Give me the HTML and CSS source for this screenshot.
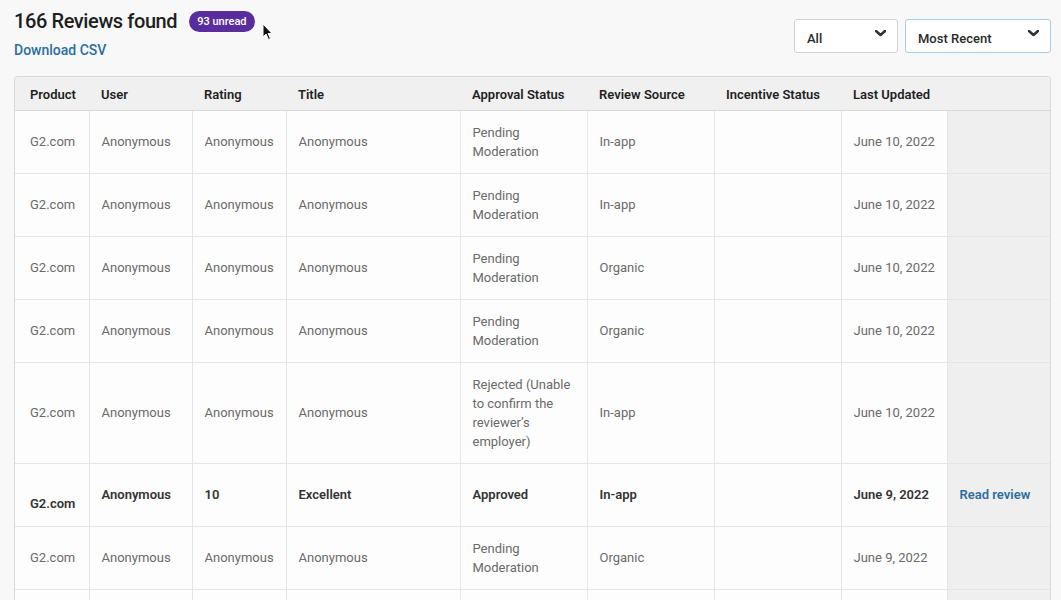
FILE: index.html
```html
<!DOCTYPE html>
<html>
<head>
<meta charset="utf-8">
<link rel="stylesheet" href="styles.css">
</head>
<body>
<div class="page">
  <div class="top">
    <div class="summary">
      <div class="title-line">
        <h1 class="title">166 Reviews found</h1>
        <span class="badge">93 unread</span>
        <svg class="cursor" width="12" height="18" viewBox="0 0 12 18"><path d="M1 1 L1 14 L4 11 L6.5 16.5 L8.5 15.5 L6 10.5 L10 10.5 Z" fill="#111" stroke="#fff" stroke-width="1"/></svg>
      </div>
      <a class="csv" href="#">Download CSV</a>
    </div>
    <div class="filters">
      <div class="select select-all"><span>All</span><svg class="chev" width="11" height="7" viewBox="0 0 11 7"><path d="M1 1 L5.5 5 L10 1" fill="none" stroke="#333" stroke-width="2.6" stroke-linecap="round" stroke-linejoin="round"/></svg></div>
      <div class="select select-sort"><span>Most Recent</span><svg class="chev" width="11" height="7" viewBox="0 0 11 7"><path d="M1 1 L5.5 5 L10 1" fill="none" stroke="#333" stroke-width="2.6" stroke-linecap="round" stroke-linejoin="round"/></svg></div>
    </div>
  </div>
  <div class="table-wrap">
    <table class="reviews">
      <colgroup>
        <col class="c-product"><col class="c-user"><col class="c-rating"><col class="c-title"><col class="c-status"><col class="c-source"><col class="c-incentive"><col class="c-date"><col class="c-action">
      </colgroup>
      <thead>
        <tr><th>Product</th><th>User</th><th>Rating</th><th>Title</th><th>Approval Status</th><th>Review Source</th><th>Incentive Status</th><th>Last Updated</th><th class="action"></th></tr>
      </thead>
      <tbody>
        <tr><td>G2.com</td><td>Anonymous</td><td>Anonymous</td><td>Anonymous</td><td>Pending<br>Moderation</td><td>In-app</td><td></td><td>June 10, 2022</td><td class="action"></td></tr>
        <tr><td>G2.com</td><td>Anonymous</td><td>Anonymous</td><td>Anonymous</td><td>Pending<br>Moderation</td><td>In-app</td><td></td><td>June 10, 2022</td><td class="action"></td></tr>
        <tr><td>G2.com</td><td>Anonymous</td><td>Anonymous</td><td>Anonymous</td><td>Pending<br>Moderation</td><td>Organic</td><td></td><td>June 10, 2022</td><td class="action"></td></tr>
        <tr><td>G2.com</td><td>Anonymous</td><td>Anonymous</td><td>Anonymous</td><td>Pending<br>Moderation</td><td>Organic</td><td></td><td>June 10, 2022</td><td class="action"></td></tr>
        <tr><td>G2.com</td><td>Anonymous</td><td>Anonymous</td><td>Anonymous</td><td>Rejected (Unable<br>to confirm the<br>reviewer’s<br>employer)</td><td>In-app</td><td></td><td>June 10, 2022</td><td class="action"></td></tr>
        <tr class="unread"><td class="product-low">G2.com</td><td>Anonymous</td><td>10</td><td>Excellent</td><td>Approved</td><td>In-app</td><td></td><td>June 9, 2022</td><td class="action"><a class="read" href="#">Read review</a></td></tr>
        <tr><td>G2.com</td><td>Anonymous</td><td>Anonymous</td><td>Anonymous</td><td>Pending<br>Moderation</td><td>Organic</td><td></td><td>June 9, 2022</td><td class="action"></td></tr>
        <tr class="partial"><td></td><td></td><td></td><td></td><td></td><td></td><td></td><td></td><td class="action"></td></tr>
      </tbody>
    </table>
  </div>
</div>
</body>
</html>
```

FILE: styles.css
```css
* { box-sizing: border-box; }
html, body { margin: 0; padding: 0; background: #f8f8f8; }
body {
  font-family: Roboto, "Liberation Sans", sans-serif;
  color: #222;
  overflow: hidden;
  height: 600px;
}
.page { padding: 8px 10px 0 14px; }
.top {
  display: flex;
  justify-content: space-between;
  align-items: flex-start;
  height: 68px;
}
.summary { display: flex; flex-direction: column; }
.title-line { display: flex; align-items: center; position: relative; height: 26px; }
.title {
  margin: 0;
  font-size: 20px;
  font-weight: 500;
  color: #1e1e1e;
  letter-spacing: -0.4px;
}
.badge {
  margin-left: 12px;
  background: #5a2d9e;
  color: #fff;
  font-size: 11px;
  font-weight: 500;
  height: 21px;
  line-height: 21px;
  padding: 0 8px;
  border-radius: 11px;
}
.cursor { position: absolute; left: 248px; top: 15px; }
.csv {
  margin-top: 8px;
  color: #2b6e9e;
  font-size: 14px;
  font-weight: 500;
  text-decoration: none;
}
.filters { display: flex; gap: 7px; margin-top: 11px; }
.select {
  display: flex;
  align-items: center;
  justify-content: space-between;
  height: 34px;
  padding: 0 11px 2px 12px;
  background: #fff;
  border: 1px solid #d2d2d2;
  border-radius: 3px;
  font-size: 13px;
  font-weight: 500;
  color: #2a2a2a;
}
.select span { margin-top: 6px; }
.select-all { width: 104px; }
.select-sort { width: 146px; border-color: #a9cde6; }
.chev { margin-top: -3px; }

.table-wrap {
  border: 1px solid #d9d9d9;
  border-bottom: none;
  border-radius: 4px 4px 0 0;
  overflow: hidden;
  background: #fdfdfd;
}
.reviews {
  width: 100%;
  border-collapse: collapse;
  table-layout: fixed;
  font-size: 13px;
}
.c-product { width: 74px; }
.c-user { width: 103px; }
.c-rating { width: 94px; }
.c-title { width: 174px; }
.c-status { width: 127px; }
.c-source { width: 127px; }
.c-incentive { width: 127px; }
.c-date { width: 106px; }
.c-action { width: auto; }
.reviews th {
  background: #f0f0f0;
  height: 33px;
  text-align: left;
  font-weight: 600;
  color: #1f1f1f;
  padding: 2px 12px 0;
  border-bottom: 1px solid #d9d9d9;
  white-space: nowrap;
}
.reviews th:first-child, .reviews td:first-child { padding-left: 15px; }
.reviews td {
  height: 63px;
  padding: 12px 11px 12px 12px;
  line-height: 19px;
  color: #6a6a6a;
  border: 1px solid #e5e5e5;
  border-top: none;
  vertical-align: middle;
  white-space: nowrap;
}
.reviews td:first-child { border-left: none; }
.reviews td.action {
  background: #efefef;
  border-left: 1px solid #bdbdbd;
  border-right: none;
}
.reviews tr.unread td { color: #333; font-weight: 600; }
.reviews td.product-low { padding-top: 30px; }
.read { color: #2b6e9e; text-decoration: none; font-weight: 600; }
```
